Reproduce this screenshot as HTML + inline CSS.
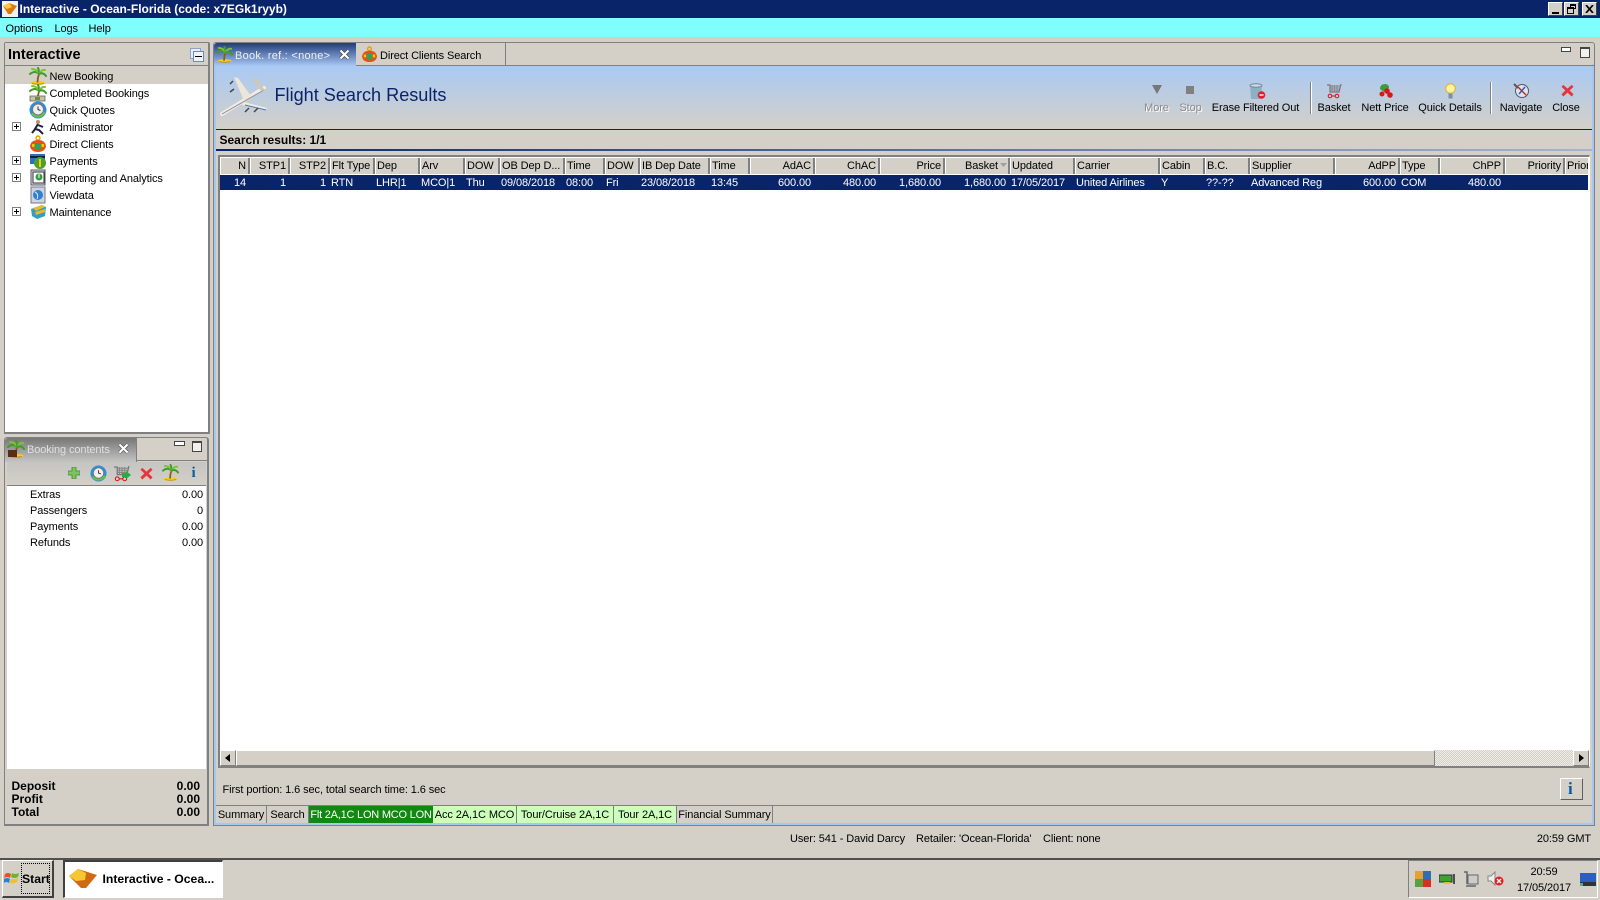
<!DOCTYPE html>
<html><head><meta charset="utf-8"><title>Interactive</title>
<style>
html,body{margin:0;padding:0;width:1600px;height:900px;overflow:hidden;background:#d4d0c8}
body{position:relative;font-family:"Liberation Sans",sans-serif;font-size:11px;letter-spacing:-.1px;color:#000}
.a,.t,.h,.c,svg.i{position:absolute}
.t{white-space:nowrap;line-height:14px;margin-top:1px}
.h{top:158px;height:16px;line-height:15px;box-sizing:border-box;background:#d4d0c8;border-left:1px solid #fff;border-right:2px solid #808080;white-space:nowrap;overflow:hidden;padding:1px 2px 0 1px}
.c{top:175px;height:15px;line-height:14px;color:#fff;white-space:nowrap;overflow:hidden;padding:1px 2px 0 1px;box-sizing:border-box}
.r{text-align:right}
.d{color:#8a8a8a}
.ctr{transform:translateX(-50%)}
.b{font-weight:bold;margin-top:0;letter-spacing:0}
.tb{position:absolute;top:806px;height:17px;line-height:18px;box-sizing:border-box;text-align:center;border-right:1px solid #808080;white-space:nowrap}
</style></head><body>
<svg width="0" height="0" style="position:absolute"><defs>
<symbol id="crown" viewBox="0 0 18 18"><g fill="none" stroke-width="2" stroke-linecap="round"><path d="M10 7 Q6 3 1 7" stroke="#3f9c28"/><path d="M10 7 Q8 2 3 2" stroke="#7cc236"/><path d="M10 7 Q10 2 9 1" stroke="#3f9c28"/><path d="M10 7 Q13 2 16 3" stroke="#7cc236"/><path d="M10 7 Q14 5 17 9" stroke="#3f9c28"/></g></symbol>
<symbol id="palm" viewBox="0 0 18 18"><ellipse cx="9" cy="15.800" rx="7.500" ry="1.800" fill="#f5cf10"/><path d="M3 16.500 Q9 18 15 16.500" stroke="#c88a10" fill="none"/><path d="M8.500 15.500 Q8.500 11 10 7" stroke="#8a5a20" stroke-width="1.800" fill="none"/><use href="#crown" width="18" height="18"/></symbol>
<symbol id="palmcash" viewBox="0 0 18 18"><path d="M9 12 L10 7" stroke="#8a5a20" stroke-width="1.800"/><use href="#crown" width="18" height="18"/><rect x="1" y="12" width="15" height="5" fill="#c8c4a0" stroke="#555" stroke-width=".7"/><rect x="6" y="13" width="5" height="3" fill="#6a8a50"/></symbol>
<symbol id="clock" viewBox="0 0 18 18"><circle cx="9" cy="9" r="8.500" fill="#2a8fe0"/><path d="M2 13 A8.500 8.500 0 0 0 16.500 12 L13 9 L5 11 Z" fill="#6cc040"/><circle cx="9" cy="8.500" r="5.500" fill="#f0f0f0" stroke="#777"/><path d="M9 5.500V8.500L11.500 9.500" stroke="#333" fill="none"/></symbol>
<symbol id="client" viewBox="0 0 18 18"><circle cx="9" cy="3" r="2" fill="none" stroke="#e0a000" stroke-width="1.400"/><path d="M1 11 Q2 5 9 5 Q16 5 17 11 Q16 17 9 17 Q2 17 1 11Z" fill="#e8501a"/><rect x="6" y="8" width="6" height="6" fill="#30a060"/><rect x="3" y="9" width="2.500" height="3" fill="#f5c800"/><rect x="12.500" y="9" width="2.500" height="3" fill="#f5c800"/></symbol>
<symbol id="redx" viewBox="0 0 14 14"><path d="M2.500 1 L7 5 L11.500 1 L13.500 3 L9.300 7 L13.500 11 L11.500 13.500 L7 9.300 L2.500 13.500 L.5 11 L4.700 7 L.5 3 Z" fill="#e8343c"/></symbol>
<symbol id="cart" viewBox="0 0 16 16"><path d="M1 2H4V9H13L15 1" fill="none" stroke="#777" stroke-width="1.200"/><path d="M4 3H14M4 5H14M4 7H13M6 2V9M8.500 2V9M11 2V9" stroke="#888" stroke-width="1"/><circle cx="4" cy="13" r="1.800" fill="none" stroke="#d01010"/><circle cx="11" cy="13" r="1.800" fill="none" stroke="#d01010"/><path d="M6 13H9" stroke="#d01010"/></symbol>
</defs></svg>

<!-- title bar -->
<div class="a" style="left:0;top:0;width:1600px;height:18px;background:#0a246a"></div>
<svg class="i" style="left:2px;top:1px" width="16" height="16" viewBox="0 0 16 16"><rect width="16" height="16" fill="#f4f2ee"/><path d="M1 5 L7 2 L15 5 L9 13 L6 13 Z" fill="#d97a14"/><path d="M1 5 L7 2 L10 6 L5 8 Z" fill="#f7c93e"/></svg>
<div class="t b" style="left:19.500px;top:2px;color:#fff;font-size:12px">Interactive - Ocean-Florida (code: x7EGk1ryyb)</div>
<div class="a" style="left:1548px;top:2px;width:15px;height:14px;background:#d4d0c8;border:1px solid;border-color:#fff #404040 #404040 #fff;box-sizing:border-box"><div class="a" style="left:3px;top:9px;width:7px;height:2px;background:#000"></div></div>
<div class="a" style="left:1564px;top:2px;width:15px;height:14px;background:#d4d0c8;border:1px solid;border-color:#fff #404040 #404040 #fff;box-sizing:border-box"><div class="a" style="left:5px;top:1px;width:6px;height:5px;border:1px solid #000;border-top-width:2px;box-sizing:border-box"></div><div class="a" style="left:2px;top:4px;width:7px;height:7px;border:1px solid #000;border-top-width:2px;box-sizing:border-box;background:#d4d0c8"></div></div>
<div class="a" style="left:1582px;top:2px;width:15px;height:14px;background:#d4d0c8;border:1px solid;border-color:#fff #404040 #404040 #fff;box-sizing:border-box"><svg class="i" style="left:2px;top:2px" width="9" height="8"><path d="M1 0L8 8M8 0L1 8" stroke="#000" stroke-width="1.700"/></svg></div>

<!-- menu -->
<div class="a" style="left:0;top:18px;width:1600px;height:19px;background:#80ffff"></div>
<div class="t" style="left:5.500px;top:21px">Options</div>
<div class="t" style="left:54.500px;top:21px">Logs</div>
<div class="t" style="left:88.500px;top:21px">Help</div>

<!-- left tree panel -->
<div class="a" style="left:4px;top:42px;width:206px;height:392px;box-sizing:border-box;border:1px solid #808080;border-width:1px 2px 2px 1px;background:#fff;border-radius:2px 2px 0 0"></div>
<div class="a" style="left:5px;top:43px;width:203px;height:22px;background:#d4d0c8;border-bottom:1px solid #808080"></div>
<div class="t b" style="left:8px;top:48px;font-size:14.500px;line-height:15px">Interactive</div>
<div class="a" style="left:190px;top:48px;width:9px;height:9px;border:1px solid #8aa4c8;background:#e6eef8"></div>
<div class="a" style="left:193px;top:51px;width:9px;height:9px;border:1px solid #6a8ab0;background:#f0f4fa"><div class="a" style="left:1px;top:4px;width:7px;height:1px;background:#000"></div></div>
<div class="a" style="left:5px;top:66px;width:203px;height:18px;background:#d4d0c8"></div>
<svg class="i" style="left:29px;top:67px" width="18" height="18"><use href="#palm"/></svg>
<svg class="i" style="left:29px;top:84px" width="18" height="18"><use href="#palmcash"/></svg>
<svg class="i" style="left:29px;top:101px" width="18" height="18"><use href="#clock"/></svg>
<svg class="i" style="left:30px;top:119px" width="16" height="16" viewBox="0 0 16 16"><circle cx="8" cy="3" r="2" fill="#c09060"/><path d="M8 5 L5 10 L9 11 L13 15 M8 6 L13 8 M6 9 L2 14" stroke="#222040" stroke-width="2" fill="none"/></svg>
<svg class="i" style="left:29px;top:135px" width="18" height="18"><use href="#client"/></svg>
<svg class="i" style="left:29px;top:152px" width="18" height="18" viewBox="0 0 18 18"><rect x="1" y="2" width="15" height="10" fill="#2a70c8"/><rect x="1" y="4" width="15" height="2" fill="#123"/><circle cx="11" cy="11" r="6" fill="#4aa030"/><path d="M11 7V15" stroke="#f5d000" stroke-width="2"/></svg>
<svg class="i" style="left:30px;top:169px" width="16" height="18" viewBox="0 0 16 18"><rect x="1" y="1" width="14" height="15" fill="#d8dde4" stroke="#556"/><rect x="3" y="3" width="11" height="11" fill="#fff" stroke="#333"/><circle cx="9" cy="8" r="3.500" fill="#30a040"/><rect x="8.500" y="5" width="1" height="4" fill="#fff"/></svg>
<svg class="i" style="left:30px;top:186px" width="16" height="18" viewBox="0 0 16 18"><rect x="1" y="1" width="14" height="16" fill="#ccd4e0" stroke="#778"/><circle cx="8" cy="9" r="5" fill="#3080d0"/><path d="M5 6 Q9 8 7 13" stroke="#cfe6ff" fill="none"/></svg>
<svg class="i" style="left:30px;top:204px" width="17" height="16" viewBox="0 0 17 16"><path d="M1 5 L12 1 L16 3 L15 12 L7 15 L2 12 Z" fill="#2f9fc8"/><path d="M3 4 L12 1 L15 3 L6 7 Z M5 8 L15 5 V8 L6 11 Z" fill="#f0b820"/></svg>
<div class="t" style="left:49.500px;top:69px">New Booking</div>
<div class="t" style="left:49.500px;top:86px">Completed Bookings</div>
<div class="t" style="left:49.500px;top:103px">Quick Quotes</div>
<div class="t" style="left:49.500px;top:120px">Administrator</div>
<div class="t" style="left:49.500px;top:137px">Direct Clients</div>
<div class="t" style="left:49.500px;top:154px">Payments</div>
<div class="t" style="left:49.500px;top:171px">Reporting and Analytics</div>
<div class="t" style="left:49.500px;top:188px">Viewdata</div>
<div class="t" style="left:49.500px;top:205px">Maintenance</div>
<svg class="i" style="left:12px;top:122px" width="9" height="9"><rect x=".5" y=".5" width="8" height="8" fill="#fff" stroke="#808080"/><path d="M2 4.500H7M4.500 2V7" stroke="#000"/></svg>
<svg class="i" style="left:12px;top:156px" width="9" height="9"><rect x=".5" y=".5" width="8" height="8" fill="#fff" stroke="#808080"/><path d="M2 4.500H7M4.500 2V7" stroke="#000"/></svg>
<svg class="i" style="left:12px;top:173px" width="9" height="9"><rect x=".5" y=".5" width="8" height="8" fill="#fff" stroke="#808080"/><path d="M2 4.500H7M4.500 2V7" stroke="#000"/></svg>
<svg class="i" style="left:12px;top:207px" width="9" height="9"><rect x=".5" y=".5" width="8" height="8" fill="#fff" stroke="#808080"/><path d="M2 4.500H7M4.500 2V7" stroke="#000"/></svg>

<!-- booking contents panel -->
<div class="a" style="left:4px;top:437px;width:205px;height:389px;box-sizing:border-box;border:1px solid #808080;border-width:1px 2px 2px 1px;border-radius:3px 3px 0 0;background:#d4d0c8"></div>
<div class="a" style="left:5px;top:438px;width:131px;height:24px;background:linear-gradient(#777,#c4c4c4);border-right:1px solid #808080;border-radius:3px 0 0 0"></div>
<div class="a" style="left:137px;top:460px;width:71px;height:1px;background:#808080"></div>
<svg class="i" style="left:7px;top:440px" width="18" height="18" viewBox="0 0 18 18"><use href="#palm"/><rect x="1" y="10" width="9" height="7" fill="#5a2c14"/></svg>
<div class="t" style="left:27px;top:442px;color:#e0e0e0">Booking contents</div>
<svg class="i" style="left:118px;top:443px" width="11" height="11"><path d="M1.500 1.500L9.500 9.500M9.500 1.500L1.500 9.500" stroke="#555" stroke-width="3.600"/><path d="M1.500 1.500L9.500 9.500M9.500 1.500L1.500 9.500" stroke="#fff" stroke-width="2.200"/></svg>
<div class="a" style="left:174px;top:441px;width:9px;height:3px;border:1px solid #444;background:#fff"></div>
<div class="a" style="left:192px;top:441px;width:8px;height:8px;border:1px solid #444;border-top-width:2px;background:#f2f0ec"></div>
<div class="a" style="left:7px;top:462px;width:199px;height:23px;background:linear-gradient(#c4c4c2,#d4d0c8);border-bottom:1px solid #808080"></div>
<svg class="i" style="left:68px;top:467px" width="12" height="12"><path d="M4 0H8V4H12V8H8V12H4V8H0V4H4Z" fill="#7fc45a" stroke="#3a8a3a" stroke-width=".8"/></svg>
<svg class="i" style="left:90px;top:465px" width="17" height="17"><use href="#clock"/></svg>
<svg class="i" style="left:113px;top:465px" width="17" height="17"><use href="#cart"/></svg>
<svg class="i" style="left:122px;top:471px" width="9" height="8"><path d="M0 2H4V0L9 4L4 8V6H0Z" fill="#1eb040"/></svg>
<svg class="i" style="left:140px;top:467px" width="13" height="13"><use href="#redx"/></svg>
<svg class="i" style="left:162px;top:464px" width="17" height="17"><use href="#palm"/></svg>
<div class="t b" style="left:191.500px;top:465px;font:bold 15px/17px 'Liberation Serif',serif;color:#0a5aa8">i</div>
<div class="a" style="left:7px;top:486px;width:199px;height:283px;background:#fff"></div>
<div class="t" style="left:30px;top:487px">Extras</div><div class="t" style="right:1397px;top:487px">0.00</div>
<div class="t" style="left:30px;top:503px">Passengers</div><div class="t" style="right:1397px;top:503px">0</div>
<div class="t" style="left:30px;top:519px">Payments</div><div class="t" style="right:1397px;top:519px">0.00</div>
<div class="t" style="left:30px;top:535px">Refunds</div><div class="t" style="right:1397px;top:535px">0.00</div>
<div class="t b" style="left:11.500px;top:779px;font-size:12px">Deposit</div><div class="t b" style="right:1400px;top:779px;font-size:12px">0.00</div>
<div class="t b" style="left:11.500px;top:792px;font-size:12px">Profit</div><div class="t b" style="right:1400px;top:792px;font-size:12px">0.00</div>
<div class="t b" style="left:11.500px;top:805px;font-size:12px">Total</div><div class="t b" style="right:1400px;top:805px;font-size:12px">0.00</div>

<!-- right main panel -->
<div class="a" style="left:213px;top:42px;width:1382px;height:784px;box-sizing:border-box;border:1px solid #808080;border-radius:3px 3px 0 0"></div>
<div class="a" style="left:214px;top:64px;width:2px;height:761px;background:#a6c8f0"></div>
<div class="a" style="left:1592px;top:64px;width:2px;height:761px;background:#a6c8f0"></div>
<div class="a" style="left:214px;top:823px;width:1380px;height:2px;background:#a6c8f0"></div>
<div class="a" style="left:356px;top:65px;width:1238px;height:1px;background:#808080"></div>
<div class="a" style="left:214px;top:43px;width:142px;height:23px;background:linear-gradient(#223c7c,#a8c8f4);border-radius:3px 0 0 0"></div>
<div class="a" style="left:356px;top:43px;width:149px;height:22px;border-right:1px solid #808080"></div>
<svg class="i" style="left:216px;top:46px" width="17" height="17"><use href="#palm"/></svg>
<div class="t" style="left:235px;top:48px;color:#f0f0f0;letter-spacing:.27px">Book. ref.: &lt;none&gt;</div>
<svg class="i" style="left:339px;top:49px" width="11" height="11"><path d="M1.500 1.500L9.500 9.500M9.500 1.500L1.500 9.500" stroke="#444" stroke-width="3.600"/><path d="M1.500 1.500L9.500 9.500M9.500 1.500L1.500 9.500" stroke="#fff" stroke-width="2.200"/></svg>
<svg class="i" style="left:361px;top:46px" width="17" height="17"><use href="#client"/></svg>
<div class="t" style="left:380px;top:48px">Direct Clients Search</div>
<div class="a" style="left:1561px;top:47px;width:8px;height:3px;border:1px solid #444;background:#fff"></div>
<div class="a" style="left:1580px;top:47px;width:8px;height:8px;border:1px solid #444;border-top-width:2px;background:#f2f0ec"></div>

<!-- banner -->
<div class="a" style="left:216px;top:66px;width:1376px;height:63px;background:linear-gradient(#a9c9f4,#d4d0c8)"></div>
<div class="a" style="left:216px;top:129px;width:1376px;height:1px;background:#0a246a"></div>
<svg class="i" style="left:220px;top:74px" width="50" height="44" viewBox="0 0 50 44"><path d="M2 40 L44 14" stroke="#f0ece4" stroke-width="4" stroke-linecap="round"/><path d="M2 40 L44 16" stroke="#8b8b8b" stroke-width="1"/><path d="M24 27 L14 3 L18 4 L31 22 Z" fill="#ece6d6"/><path d="M24 28 L47 34 L46 36 L22 31 Z" fill="#f0ece0"/><path d="M25 31 L46 36" stroke="#4a76b0"/><path d="M40 16 L33 5 L37 4 L44 15 L48 15 L48 17 Z" fill="#cfc8b8"/><path d="M10 10 L13 7M10 18 L14 15M25 38 L29 34M34 38 L38 34" stroke="#444" stroke-width="1.500"/></svg>
<div class="t" style="left:274.500px;top:84px;font-size:18.100px;letter-spacing:0;line-height:20px;color:#0a246a">Flight Search Results</div>

<!-- toolbar -->
<svg class="i" style="left:1151px;top:84px" width="12" height="11"><path d="M1 1H11L6 10Z" fill="#777"/></svg>
<div class="a" style="left:1186px;top:86px;width:8px;height:8px;background:#808080"></div>
<svg class="i" style="left:1249px;top:83px" width="17" height="17" viewBox="0 0 17 17"><path d="M1 2H13L12 16H2Z" fill="#8fb0c4"/><ellipse cx="7" cy="2.500" rx="6" ry="1.800" fill="#c8dce4" stroke="#789"/><circle cx="12.500" cy="12" r="3.800" fill="#e02030"/><rect x="10.500" y="11.300" width="4" height="1.400" fill="#fff"/></svg>
<svg class="i" style="left:1326px;top:83px" width="16" height="16"><use href="#cart"/></svg>
<svg class="i" style="left:1377px;top:83px" width="17" height="16" viewBox="0 0 17 16"><path d="M3 6 Q3 1 8 1 Q12 1 12 5 L7 9 Z" fill="#3d9b3d"/><circle cx="5" cy="11" r="2.500" fill="#d81818"/><circle cx="10" cy="8" r="2.800" fill="#d81818"/><circle cx="13" cy="12" r="2.800" fill="#d81818"/></svg>
<svg class="i" style="left:1445px;top:83px" width="11" height="17" viewBox="0 0 11 17"><circle cx="5.500" cy="5.500" r="4.800" fill="#fff2a0" stroke="#e0b030"/><rect x="3.500" y="10.500" width="4" height="5" fill="#7a90a8"/></svg>
<svg class="i" style="left:1513px;top:82px" width="17" height="17" viewBox="0 0 17 17"><circle cx="9" cy="9" r="6.500" fill="#dce6f0" stroke="#556"/><path d="M5 5 L13 13" stroke="#d02020" stroke-width="1.500"/><path d="M12 5 L6 12" stroke="#2a60b0" stroke-width="1.500"/><path d="M1 2L5 6" stroke="#654" stroke-width="2"/></svg>
<svg class="i" style="left:1561px;top:84px" width="13" height="13"><use href="#redx"/></svg>
<div class="a" style="left:1310px;top:82px;width:1px;height:32px;background:#808080;border-right:1px solid #fff"></div>
<div class="a" style="left:1490px;top:82px;width:1px;height:32px;background:#808080;border-right:1px solid #fff"></div>
<div class="t ctr d" style="left:1156.500px;top:100px;text-shadow:1px 1px 0 #fff">More</div>
<div class="t ctr d" style="left:1190.500px;top:100px;text-shadow:1px 1px 0 #fff">Stop</div>
<div class="t ctr" style="left:1255.500px;top:100px">Erase Filtered Out</div>
<div class="t ctr" style="left:1334px;top:100px">Basket</div>
<div class="t ctr" style="left:1385px;top:100px">Nett Price</div>
<div class="t ctr" style="left:1450px;top:100px">Quick Details</div>
<div class="t ctr" style="left:1521px;top:100px">Navigate</div>
<div class="t ctr" style="left:1566px;top:100px">Close</div>

<!-- search results -->
<div class="t b" style="left:219.500px;top:133px;font-size:12px">Search results: 1/1</div>
<div class="a" style="left:216px;top:149px;width:1376px;height:2px;background:linear-gradient(90deg,#0a246a,#a6b4d0)"></div>

<!-- grid -->
<div class="a" style="left:218px;top:155px;width:1372px;height:613px;box-sizing:border-box;background:#fff;border:1px solid;border-width:2px 1px 2px 2px;border-color:#808080 #fff #808080 #808080"></div>
<div class="a" style="left:220px;top:175px;width:1368px;height:15px;background:#0a246a"></div>

<div class="h r" style="left:220px;width:30px">N</div>
<div class="h r" style="left:250px;width:40px">STP1</div>
<div class="h r" style="left:290px;width:40px">STP2</div>
<div class="h" style="left:330px;width:45px">Flt Type</div>
<div class="h" style="left:375px;width:45px">Dep</div>
<div class="h" style="left:420px;width:45px">Arv</div>
<div class="h" style="left:465px;width:35px">DOW</div>
<div class="h" style="left:500px;width:65px">OB Dep D...</div>
<div class="h" style="left:565px;width:40px">Time</div>
<div class="h" style="left:605px;width:35px">DOW</div>
<div class="h" style="left:640px;width:70px">IB Dep Date</div>
<div class="h" style="left:710px;width:40px">Time</div>
<div class="h r" style="left:750px;width:65px">AdAC</div>
<div class="h r" style="left:815px;width:65px">ChAC</div>
<div class="h r" style="left:880px;width:65px">Price</div>
<div class="h r" style="left:945px;width:65px;padding-right:10px">Basket</div>
<svg class="i" style="left:1000px;top:163px" width="8" height="5"><path d="M0 0H7L3.500 4Z" fill="#a0a0a0"/></svg>
<div class="h" style="left:1010px;width:65px">Updated</div>
<div class="h" style="left:1075px;width:85px">Carrier</div>
<div class="h" style="left:1160px;width:45px">Cabin</div>
<div class="h" style="left:1205px;width:45px">B.C.</div>
<div class="h" style="left:1250px;width:85px">Supplier</div>
<div class="h r" style="left:1335px;width:65px">AdPP</div>
<div class="h" style="left:1400px;width:40px">Type</div>
<div class="h r" style="left:1440px;width:65px">ChPP</div>
<div class="h r" style="left:1505px;width:60px">Priority</div>
<div class="h" style="left:1565px;width:23px;border-right:0;padding-right:0">Prior</div>

<div class="c r" style="left:220px;width:28px">14</div>
<div class="c r" style="left:250px;width:38px">1</div>
<div class="c r" style="left:290px;width:38px">1</div>
<div class="c" style="left:330px;width:45px">RTN</div>
<div class="c" style="left:375px;width:45px">LHR|1</div>
<div class="c" style="left:420px;width:45px">MCO|1</div>
<div class="c" style="left:465px;width:35px">Thu</div>
<div class="c" style="left:500px;width:65px">09/08/2018</div>
<div class="c" style="left:565px;width:40px">08:00</div>
<div class="c" style="left:605px;width:35px">Fri</div>
<div class="c" style="left:640px;width:70px">23/08/2018</div>
<div class="c" style="left:710px;width:40px">13:45</div>
<div class="c r" style="left:750px;width:63px">600.00</div>
<div class="c r" style="left:815px;width:63px">480.00</div>
<div class="c r" style="left:880px;width:63px">1,680.00</div>
<div class="c r" style="left:945px;width:63px">1,680.00</div>
<div class="c" style="left:1010px;width:65px">17/05/2017</div>
<div class="c" style="left:1075px;width:85px">United Airlines</div>
<div class="c" style="left:1160px;width:45px">Y</div>
<div class="c" style="left:1205px;width:45px">??-??</div>
<div class="c" style="left:1250px;width:85px">Advanced Reg</div>
<div class="c r" style="left:1335px;width:63px">600.00</div>
<div class="c" style="left:1400px;width:40px">COM</div>
<div class="c r" style="left:1440px;width:63px">480.00</div>

<!-- scrollbar -->
<div class="a" style="left:220px;top:750px;width:1368px;height:16px;background-color:#eeece8;background-image:linear-gradient(45deg,#d4d0c8 25%,transparent 25%,transparent 75%,#d4d0c8 75%),linear-gradient(45deg,#d4d0c8 25%,transparent 25%,transparent 75%,#d4d0c8 75%);background-size:2px 2px;background-position:0 0,1px 1px"></div>
<div class="a" style="left:220px;top:750px;width:16px;height:16px;box-sizing:border-box;background:#d4d0c8;border:1px solid;border-color:#fff #808080 #808080 #fff"><svg class="i" style="left:4px;top:3px" width="6" height="9"><path d="M5 0V8L0 4Z" fill="#000"/></svg></div>
<div class="a" style="left:236px;top:750px;width:1199px;height:16px;box-sizing:border-box;background:#d4d0c8;border:1px solid;border-color:#fff #808080 #808080 #fff"></div>
<div class="a" style="left:1573px;top:750px;width:16px;height:16px;box-sizing:border-box;background:#d4d0c8;border:1px solid;border-color:#fff #808080 #808080 #fff"><svg class="i" style="left:5px;top:3px" width="6" height="9"><path d="M0 0V8L5 4Z" fill="#000"/></svg></div>

<!-- footer of main panel -->
<div class="t" style="left:222.500px;top:782px">First portion: 1.6 sec, total search time: 1.6 sec</div>
<div class="a" style="left:1560px;top:778px;width:23px;height:22px;box-sizing:border-box;background:#d4d0c8;border:1px solid;border-color:#fff #606060 #606060 #fff"></div>
<div class="t b" style="left:1568px;top:780px;font:bold 17px/18px 'Liberation Serif',serif;color:#0a5aa8">i</div>
<div class="a" style="left:216px;top:805px;width:1376px;height:1px;background:#808080"></div>
<div class="tb" style="left:216px;width:51px">Summary</div>
<div class="tb" style="left:267px;width:42px">Search</div>
<div class="tb" style="left:309px;width:124px;background:#118811;color:#fff;border-right:0;letter-spacing:-.22px">Flt 2A,1C LON MCO LON</div>
<div class="tb" style="left:433px;width:84px;background:#ccffbb">Acc 2A,1C MCO</div>
<div class="tb" style="left:517px;width:97px;background:#ccffbb">Tour/Cruise 2A,1C</div>
<div class="tb" style="left:614px;width:63px;background:#ccffbb">Tour 2A,1C</div>
<div class="tb" style="left:677px;width:96px">Financial Summary</div>

<!-- status -->
<div class="t" style="left:790px;top:831px">User: 541 - David Darcy</div>
<div class="t" style="left:916px;top:831px">Retailer: 'Ocean-Florida'</div>
<div class="t" style="left:1043px;top:831px">Client: none</div>
<div class="t" style="right:9px;top:831px">20:59 GMT</div>

<!-- taskbar -->
<div class="a" style="left:0;top:858px;width:1600px;height:2px;background:#505050"></div>
<div class="a" style="left:2px;top:860px;width:52px;height:38px;box-sizing:border-box;background:#d4d0c8;border:1px solid;border-width:1px 2px 2px 1px;border-color:#fff #404040 #404040 #fff"></div>
<svg class="i" style="left:4px;top:871px" width="15" height="15" viewBox="0 0 15 15"><path d="M1 3 Q4 1 7 3 L6 7 Q3 5 0 7Z" fill="#e8502a"/><path d="M8 2 Q11 4 15 2 L14 6 Q10 8 7 6Z" fill="#6cb42c"/><path d="M0 8 Q3 6 6 8 L5 12 Q2 10 0 12Z" fill="#2a80d8"/><path d="M7 8 Q10 9 14 7 L13 11 Q9 13 6 12Z" fill="#f2c020"/></svg>
<div class="t b" style="left:22px;top:872px;font-size:12.200px">Start</div>
<div class="a" style="left:21px;top:863px;width:29px;height:31px;box-sizing:border-box;border:1px dotted #000"></div>
<div class="a" style="left:63px;top:860px;width:160px;height:38px;box-sizing:border-box;background:#fff;border:1px solid;border-width:2px 1px 1px 2px;border-color:#404040 #fff #fff #404040"></div>
<svg class="i" style="left:69px;top:868px" width="29" height="22" viewBox="0 0 29 22"><path d="M0 8 L9 1 L28 7 L17 20 L12 20 Z" fill="#cf6a14"/><path d="M0 8 L9 1 L17 5 L16 12 L7 13 Z" fill="#f7c732"/></svg>
<div class="t b" style="left:102.500px;top:872px;font-size:12.200px">Interactive - Ocea...</div>
<div class="a" style="left:1408px;top:860px;width:190px;height:38px;box-sizing:border-box;border:1px solid;border-color:#808080 #fff #fff #808080"></div>
<svg class="i" style="left:1415px;top:871px" width="16" height="16"><rect width="8" height="8" fill="#e8a030"/><rect x="8" width="8" height="8" fill="#2a70b8"/><rect y="8" width="8" height="8" fill="#5aa040"/><rect x="8" y="8" width="8" height="8" fill="#d83020"/></svg>
<svg class="i" style="left:1439px;top:873px" width="16" height="12"><rect y="2" width="13" height="7" fill="#40a030" stroke="#234"/><rect x="5" y="9" width="6" height="2" fill="#e0c030"/><path d="M15 1V11" stroke="#222" stroke-width="1.500"/></svg>
<svg class="i" style="left:1463px;top:871px" width="16" height="16"><path d="M1 1H4V13" fill="none" stroke="#666" stroke-width="1.500"/><rect x="5" y="4" width="10" height="9" fill="#ccc" stroke="#666"/><path d="M3 15H13" stroke="#666" stroke-width="1.500"/></svg>
<svg class="i" style="left:1487px;top:871px" width="17" height="16"><path d="M1 5H4L8 1V14L4 10H1Z" fill="#eee" stroke="#888"/><circle cx="12" cy="10" r="4.500" fill="#e02020"/><path d="M10 8L14 12M14 8L10 12" stroke="#fff" stroke-width="1.300"/></svg>
<div class="t ctr" style="left:1544px;top:864px">20:59</div>
<div class="t ctr" style="left:1544px;top:880px">17/05/2017</div>
<svg class="i" style="left:1580px;top:873px" width="16" height="13"><rect width="16" height="13" fill="#2a60c0"/><rect y="9" width="16" height="4" fill="#333"/><rect x="0" y="10" width="3" height="3" fill="#5a9"/></svg>
</body></html>
